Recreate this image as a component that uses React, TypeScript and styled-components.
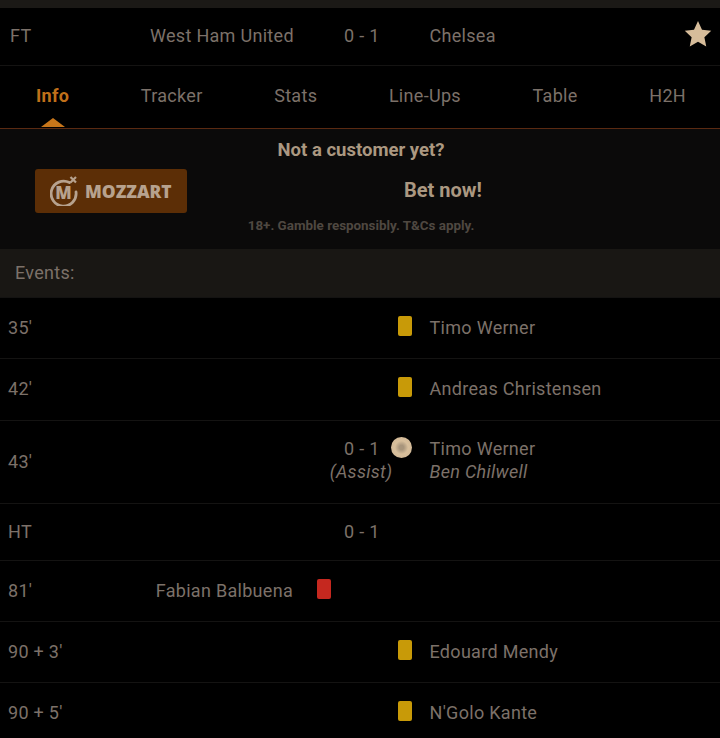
import styled, { createGlobalStyle } from "styled-components";

const GlobalStyle = createGlobalStyle`
  html, body {
    margin: 0;
    background: #000;
    overflow: hidden;
  }
  body {
    font-family: Roboto, "Liberation Sans", sans-serif;
    color: #7c7169;
  }
`;

const columns = "150px 143px 51px 34px 51.5px 1fr";

const Page = styled.div`
  width: 720px;
  height: 738px;
  overflow: hidden;
  background: #000;
  font-size: 18px;
  letter-spacing: 0.3px;
`;

const TopStrip = styled.div`
  height: 8px;
  background: #1b1916;
`;

const MatchRow = styled.div`
  position: relative;
  display: grid;
  grid-template-columns: ${columns};
  align-items: center;
  height: 58px;
  box-sizing: border-box;
  border-bottom: 1px solid #141312;
  padding-bottom: 2px;
`;

const FullTime = styled.span`
  padding-left: 10px;
`;

const Star = styled.svg`
  position: absolute;
  right: 7px;
  top: 11px;
  width: 30px;
  height: 30px;
  fill: #d6bc9a;
`;

const Tabs = styled.nav`
  display: flex;
  justify-content: space-between;
  align-items: center;
  height: 63px;
  padding: 0 34px 4px 36px;
  box-sizing: border-box;
  border-bottom: 1px solid #5a2a12;
`;

const Tab = styled.span<{ $active?: boolean }>`
  position: relative;
  font-weight: ${(p) => (p.$active ? 700 : 400)};
  color: ${(p) => (p.$active ? "#c0701a" : "#7c7169")};
  letter-spacing: 0.3px;

  ${(p) =>
    p.$active &&
    `
    &::after {
      content: "";
      position: absolute;
      left: 50%;
      bottom: -21px;
      margin-left: -12px;
      border-left: 12px solid transparent;
      border-right: 12px solid transparent;
      border-bottom: 9px solid #c8761a;
    }
  `}
`;

const Promo = styled.section`
  display: flex;
  flex-direction: column;
  height: 120px;
  background: #0b0a0a;
`;

const PromoTitle = styled.div`
  height: 40px;
  line-height: 43px;
  text-align: center;
  font-size: 18.5px;
  font-weight: 700;
  letter-spacing: 0;
  color: #ab9881;
  padding-left: 2px;
`;

const PromoMiddle = styled.div`
  display: flex;
  align-items: center;
  gap: 217px;
  padding-left: 35px;
`;

const Logo = styled.div`
  display: flex;
  align-items: center;
  gap: 7px;
  width: 152px;
  height: 44px;
  box-sizing: border-box;
  padding-left: 15px;
  border-radius: 3px;
  background: #5c2e06;
`;

const LogoMark = styled.svg`
  width: 28px;
  height: 30px;
  flex: none;
`;

const LogoWord = styled.span`
  font-family: "Open Sans", Roboto, sans-serif;
  font-size: 17.4px;
  font-weight: 800;
  letter-spacing: 0;
  color: #b7a28e;
`;

const BetNow = styled.span`
  position: relative;
  top: -1px;
  font-size: 20px;
  font-weight: 700;
  letter-spacing: 0;
  color: #ab9881;
`;

const PromoNote = styled.div`
  margin-top: 5px;
  text-align: center;
  font-size: 13.4px;
  font-weight: 700;
  letter-spacing: 0;
  color: #4f4841;
  padding-left: 2px;
`;

const EventsHeader = styled.div`
  display: flex;
  align-items: center;
  height: 48px;
  padding: 0 0 2px 15px;
  box-sizing: border-box;
  background: #191714;
  color: #7c7169;
`;

const EventRow = styled.div<{ $height: number }>`
  display: grid;
  grid-template-columns: ${columns};
  align-items: center;
  align-content: center;
  height: ${(p) => p.$height}px;
  box-sizing: border-box;
  padding-bottom: 2px;
  border-top: 1px solid #141312;
`;

const Minute = styled.span<{ $tall?: boolean }>`
  padding-left: 8px;
  ${(p) => p.$tall && "grid-row: 1 / 3;"}
`;

const Home = styled.span`
  text-align: right;
  white-space: nowrap;
`;

const Slot = styled.span`
  display: flex;
  justify-content: center;
`;

const HomeSlot = styled(Slot)`
  padding-left: 10px;
  box-sizing: border-box;
`;

const AwaySlot = styled(Slot)`
  padding-left: 2px;
`;

const Score = styled.span<{ $column?: number }>`
  text-align: center;
  white-space: nowrap;
  ${(p) => p.$column && `grid-column: ${p.$column};`}
`;

const Player = styled.span`
  white-space: nowrap;
`;

const Card = styled.span<{ $red?: boolean }>`
  display: block;
  width: 14px;
  height: 20px;
  margin-bottom: 3px;
  border-radius: 2px;
  background: ${(p) => (p.$red ? "#c5281f" : "#c89a08")};
`;

const Ball = styled.span`
  display: block;
  width: 21px;
  height: 21px;
  margin: -2px 0 0 -6px;
  border-radius: 50%;
  background: radial-gradient(circle, #a8957c 0 15%, #d8bf9c 45%, #cdb493 100%);
`;

const Assist = styled.span`
  font-style: italic;
  line-height: 25px;
`;

const AssistLabel = styled(Assist)`
  grid-column: 2 / 6;
  padding-right: 37px;
  text-align: right;
`;

const AssistName = styled(Assist)`
  grid-column: 6;
`;

type EventData = {
  minute: string;
  height: number;
  home?: string;
  homeRed?: boolean;
  away?: string;
  awayCard?: boolean;
  score?: string;
};

const events: EventData[] = [
  { minute: "35'", height: 61, away: "Timo Werner", awayCard: true },
  { minute: "42'", height: 62, away: "Andreas Christensen", awayCard: true },
  { minute: "HT", height: 57, score: "0 - 1" },
  { minute: "81'", height: 61, home: "Fabian Balbuena", homeRed: true },
  { minute: "90 + 3'", height: 61, away: "Edouard Mendy", awayCard: true },
  { minute: "90 + 5'", height: 61, away: "N'Golo Kante", awayCard: true },
];

function SimpleEvent({ event }: { event: EventData }) {
  return (
    <EventRow $height={event.height}>
      <Minute>{event.minute}</Minute>
      <Home>{event.home}</Home>
      <HomeSlot>{event.homeRed && <Card $red />}</HomeSlot>
      <Score>{event.score}</Score>
      <AwaySlot>{event.awayCard && <Card />}</AwaySlot>
      <Player>{event.away}</Player>
    </EventRow>
  );
}

function GoalEvent() {
  return (
    <EventRow $height={83}>
      <Minute $tall>43'</Minute>
      <Score $column={4}>0 - 1</Score>
      <AwaySlot>
        <Ball />
      </AwaySlot>
      <Player>Timo Werner</Player>
      <AssistLabel>(Assist)</AssistLabel>
      <AssistName>Ben Chilwell</AssistName>
    </EventRow>
  );
}

export default function App() {
  return (
    <Page>
      <GlobalStyle />
      <TopStrip />
      <MatchRow>
        <FullTime>FT</FullTime>
        <Home>West Ham United</Home>
        <span />
        <Score>0 - 1</Score>
        <span />
        <Player>Chelsea</Player>
        <Star viewBox="0 0 24 24">
          <path d="M12 1.6l3.2 6.9 7.4.9-5.5 5.1 1.5 7.4L12 18.2l-6.6 3.7 1.5-7.4-5.5-5.1 7.4-.9z" />
        </Star>
      </MatchRow>
      <Tabs>
        <Tab $active>Info</Tab>
        <Tab>Tracker</Tab>
        <Tab>Stats</Tab>
        <Tab>Line-Ups</Tab>
        <Tab>Table</Tab>
        <Tab>H2H</Tab>
      </Tabs>
      <Promo>
        <PromoTitle>Not a customer yet?</PromoTitle>
        <PromoMiddle>
          <Logo>
            <LogoMark viewBox="0 0 28 30">
              <path
                d="M19.5 6.6A12.5 12.5 0 1 0 26 16"
                fill="none"
                stroke="#b7a28e"
                strokeWidth="2.8"
                strokeLinecap="round"
              />
              <path d="M20.5 1l5.5 5.5M26 1l-5.5 5.5" stroke="#b7a28e" strokeWidth="2.2" />
              <text
                x="13.5"
                y="23"
                textAnchor="middle"
                fontFamily="Open Sans, sans-serif"
                fontSize="17"
                fontWeight="800"
                fill="#b7a28e"
              >
                M
              </text>
            </LogoMark>
            <LogoWord>MOZZART</LogoWord>
          </Logo>
          <BetNow>Bet now!</BetNow>
        </PromoMiddle>
        <PromoNote>18+. Gamble responsibly. T&amp;Cs apply.</PromoNote>
      </Promo>
      <EventsHeader>Events:</EventsHeader>
      <SimpleEvent event={events[0]} />
      <SimpleEvent event={events[1]} />
      <GoalEvent />
      {events.slice(2).map((event) => (
        <SimpleEvent key={event.minute} event={event} />
      ))}
    </Page>
  );
}
